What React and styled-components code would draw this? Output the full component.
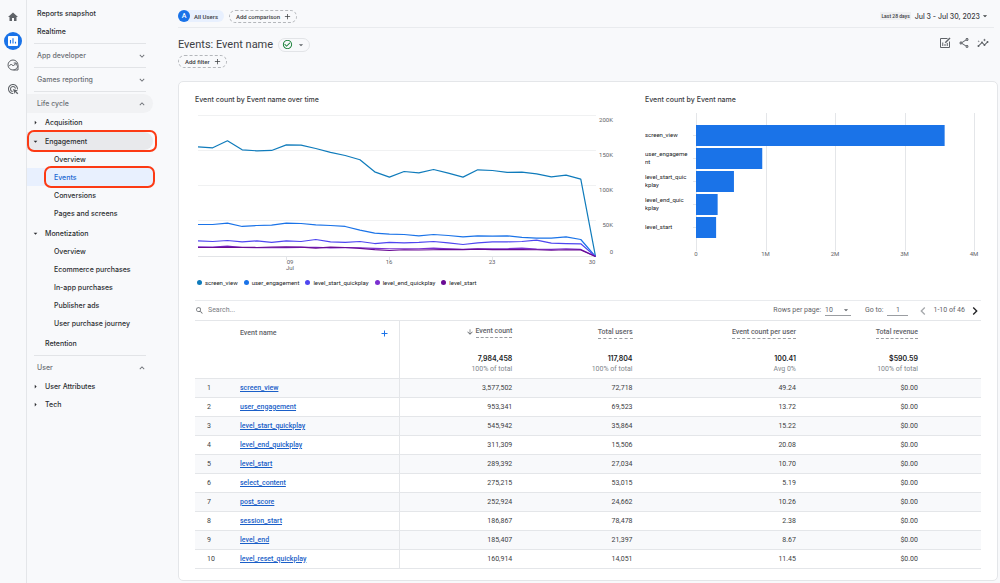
import styled, { createGlobalStyle, css } from "styled-components";
import {
  MdAdd,
  MdAdsClick,
  MdArrowDownward,
  MdArrowDropDown,
  MdArrowRight,
  MdCheckCircleOutline,
  MdChevronLeft,
  MdChevronRight,
  MdHome,
  MdInsights,
  MdKeyboardArrowDown,
  MdKeyboardArrowUp,
  MdOutlineShare,
  MdSearch,
} from "react-icons/md";

const GlobalStyle = createGlobalStyle`
  * {
    box-sizing: border-box;
  }

  body {
    margin: 0;
    background: #f8f9fb;
    color: #202124;
    font-family: Roboto, "Liberation Sans", sans-serif;
    font-size: 7px;
    line-height: 11px;
  }

  button,
  input,
  select {
    margin: 0;
    padding: 0;
    border: 0;
    background: none;
    color: inherit;
    font: inherit;
  }

  button {
    display: inline-flex;
    align-items: center;
    cursor: pointer;
  }

  ul {
    margin: 0;
    padding: 0;
    list-style: none;
  }

  h1,
  h2 {
    margin: 0;
    font-weight: 400;
  }

  svg {
    flex: none;
  }
`;

const Page = styled.div`
  display: grid;
  grid-template-columns: 27px 151px minmax(0, 1fr);
  min-height: 100vh;
`;

/* ---------- icon rail ---------- */

const Rail = styled.nav`
  display: flex;
  flex-direction: column;
  align-items: center;
  gap: 6px;
  padding-top: 8px;
  border-right: 1px solid #e4e6e9;
`;

const RailButton = styled.button`
  justify-content: center;
  width: 18px;
  height: 18px;
  border-radius: 50%;
  color: ${({ $active }) => ($active ? "#fff" : "#5f6368")};
  background: ${({ $active }) => ($active ? "#1a73e8" : "none")};
`;

/* ---------- side menu ---------- */

const Menu = styled.nav`
  padding-top: 4px;
  font-family: Inter, "Liberation Sans", sans-serif;
  font-weight: 500;
`;

const Separator = styled.hr`
  height: 1px;
  margin: ${({ $gap }) => $gap || 2}px 32px 2px 7px;
  border: 0;
  background: #e2e4e7;
`;

const Section = styled.button`
  justify-content: space-between;
  width: 126px;
  height: 19px;
  padding: 0 6px 0 10px;
  border-radius: 0 10px 10px 0;
  color: #6b6f74;
  background: ${({ $open }) => ($open ? "#f1f2f4" : "none")};
`;

const Groups = styled.ul`
  display: flex;
  flex-direction: column;
  gap: 1px;
`;

const SubList = styled.ul`
  margin-bottom: 1px;
`;

const marked = css`
  &::after {
    content: "";
    position: absolute;
    top: -2px;
    right: ${({ $inset }) => ($inset ? -2 : -4)}px;
    bottom: -2px;
    left: ${({ $inset }) => $inset || 0}px;
    border: 2px solid #fc3a14;
    border-radius: 7px;
    pointer-events: none;
  }
`;

const MenuLink = styled.a`
  position: relative;
  display: flex;
  align-items: center;
  width: 126px;
  height: 18px;
  padding-left: ${({ $level }) => [10, 4, 27][$level]}px;
  border-radius: ${({ $selected }) => ($selected ? "0" : "0 9px 9px 0")};
  color: ${({ $selected }) => ($selected ? "#1967d2" : "#2b2d30")};
  background: ${({ $selected, $parent }) =>
    $selected ? "#e8f0fe" : $parent ? "#e8e9ec" : "none"};
  text-decoration: none;
  ${({ $marked }) => $marked && marked}
`;

const Caret = styled.span`
  display: flex;
  width: 14px;
`;

/* ---------- header ---------- */

const Main = styled.main`
  padding-right: 2px;
`;

const TopBar = styled.header`
  display: flex;
  align-items: center;
  gap: 5px;
  height: 28px;
  margin-right: 4px;
  padding-top: 5px;
  border-bottom: 1px solid #e9ebee;
  color: #3c4043;
`;

const Chip = styled.button`
  gap: 3px;
  height: 13px;
  padding: 0 4px 0 6px;
  border: 1px dashed #b4b7bb;
  border-radius: 7px;
  color: #3c4043;
  font-size: 6px;
  font-weight: 500;
`;

const UserChip = styled.button`
  gap: 4px;
  height: 12px;
  padding-right: 6px;
  border-radius: 6px;
  color: #3c4043;
  background: #e8f0fe;
  font-size: 6px;
  font-weight: 500;
`;

const Letter = styled.span`
  width: 12px;
  height: 12px;
  border-radius: 50%;
  background: #1a73e8;
  color: #fff;
  font-size: 7px;
  line-height: 12px;
  text-align: center;
`;

const DateButton = styled.button`
  margin-left: auto;
  padding-right: 4px;
  color: #3c4043;
  font-family: Inter, "Liberation Sans", sans-serif;
  font-weight: 500;
`;

const Period = styled.span`
  margin-right: 4px;
  padding: 0 1px;
  background: #eff0f2;
  font-family: Roboto, "Liberation Sans", sans-serif;
  font-size: 5px;
  line-height: 8px;
`;

const TitleRow = styled.div`
  display: flex;
  align-items: center;
  height: 15px;
  margin-top: 9px;
`;

const Title = styled.h1`
  margin-right: 5px;
  color: #3c4043;
  font-size: 11px;
  line-height: 15px;
`;

const StatusButton = styled.button`
  gap: 3px;
  height: 14px;
  padding: 0 3px;
  border: 1px solid #e2e4e7;
  border-radius: 7px;
  color: #5f6368;
`;

const Tools = styled.div`
  display: flex;
  gap: 7px;
  margin-left: auto;
  padding: 0 9px 3px 0;
  color: #5f6368;
`;

const Filters = styled.div`
  display: flex;
  margin-top: 3px;
`;

/* ---------- report card ---------- */

const Card = styled.section`
  margin: 13px 0 2px;
  padding: 12px 16px 11px;
  border: 1px solid #e4e6e9;
  border-radius: 5px;
  background: #fff;
`;

const Charts = styled.div`
  display: grid;
  grid-template-columns: minmax(0, 1fr) 336px;
  padding-bottom: 12px;
  border-bottom: 1px solid #e9ebee;
`;

const ChartTitle = styled.h2`
  color: #3c4043;
  font-family: Inter, "Liberation Sans", sans-serif;
  font-size: 7px;
  font-weight: 500;
  line-height: 11px;
`;

const Plot = styled.svg`
  display: block;
  width: 100%;
  margin-top: 2px;
  font-size: 6px;
  fill: #5f6368;
`;

const Legend = styled.ul`
  display: flex;
  gap: 6px;
  margin-top: 2px;
  padding-left: 2px;
  font-size: 6px;
`;

const LegendItem = styled.li`
  display: flex;
  align-items: center;
  gap: 3px;

  &::before {
    content: "";
    width: 5px;
    height: 5px;
    border-radius: 50%;
    background: ${({ $color }) => $color};
  }
`;

/* ---------- table ---------- */

const SearchRow = styled.div`
  display: flex;
  align-items: center;
  height: 20px;
  border-bottom: 1px solid #e4e6e9;
  color: #5f6368;
`;

const SearchLabel = styled.label`
  display: flex;
  flex: 1;
  align-items: center;
  gap: 4px;
`;

const SearchInput = styled.input`
  width: 120px;
  outline: none;

  &::placeholder {
    color: #7a7e83;
    opacity: 1;
  }
`;

const Field = styled.label`
  display: flex;
  align-items: center;
  gap: 4px;
  margin-right: ${({ $gap }) => $gap}px;
`;

const SelectBox = styled.span`
  display: flex;
  align-items: center;
  width: 26px;
  border-bottom: 1px solid #9a9da1;

  svg {
    margin-left: -10px;
    pointer-events: none;
  }
`;

const Select = styled.select`
  width: 26px;
  height: 10px;
  appearance: none;
  outline: none;
`;

const PageInput = styled.input`
  width: 21px;
  height: 11px;
  border-bottom: 1px solid #9a9da1;
  outline: none;
  text-align: center;
`;

const Pager = styled.div`
  display: flex;
  align-items: center;
  gap: 2px;
  margin-right: -2px;
`;

const PagerButton = styled.button`
  color: ${({ disabled }) => (disabled ? "#a5a8ac" : "#202124")};
`;

const Table = styled.table`
  width: 100%;
  table-layout: fixed;
  border-collapse: separate;
  border-spacing: 0;

  th,
  td {
    padding: 0 63px 0 0;
    text-align: right;
    white-space: nowrap;
  }

  th:nth-child(1),
  td:nth-child(1) {
    padding: 0 0 0 12px;
    text-align: left;
  }

  th:nth-child(2),
  td:nth-child(2) {
    padding: 0 10px 0 0;
    border-right: 1px solid #e4e6e9;
    text-align: left;
  }
`;

const HeadRow = styled.tr`
  th {
    height: 24px;
    color: #5f6368;
    font-weight: 500;
  }
`;

const TotalRow = styled.tr`
  td {
    height: 34px;
    border-bottom: 1px solid #e4e6e9;
  }
`;

const BodyRow = styled.tr`
  color: #3c4043;

  &:nth-child(odd) {
    background: #f8f9fb;
  }

  td {
    height: 19px;
    border-bottom: 1px solid #e4e6e9;
  }
`;

const NameHead = styled.span`
  display: flex;
  align-items: center;
  justify-content: space-between;
`;

const AddColumn = styled.button`
  color: #1a73e8;
`;

const SortButton = styled.button`
  gap: 2px;
`;

const Dashed = styled.span`
  display: inline-block;
  border-bottom: 1px dashed #9a9da1;
`;

const Total = styled.strong`
  display: block;
  margin-top: 4px;
  font-family: Inter, "Liberation Sans", sans-serif;
  font-weight: 600;
`;

const Share = styled.small`
  display: block;
  color: #80868b;
  font-size: 7px;
`;

const EventLink = styled.a`
  color: #1a5fc8;
  font-weight: 500;
  text-decoration: underline;
`;

const menuGroups = [
  { name: "Acquisition" },
  {
    name: "Engagement",
    parent: true,
    items: ["Overview", "Events", "Conversions", "Pages and screens"],
  },
  {
    name: "Monetization",
    items: [
      "Overview",
      "Ecommerce purchases",
      "In-app purchases",
      "Publisher ads",
      "User purchase journey",
    ],
  },
  { name: "Retention", leaf: true },
];

// daily counts in thousands, July 3 to July 30
const series = [
  {
    name: "screen_view",
    color: "#0f7bbb",
    values: [
      155.6, 154.2, 164.1, 151.3, 149.9, 150.4, 158.4, 158, 153.2, 147.6, 143.3,
      137.2, 120.1, 112.6, 120.6, 118.7, 123.4, 118.2, 112.6, 123, 122, 119.2,
      119.7, 117.3, 113, 115.4, 109.7, 0,
    ],
  },
  {
    name: "user_engagement",
    color: "#1a73e8",
    values: [
      45.4, 45.4, 47.3, 42.6, 44, 44.5, 47.3, 46.8, 44.9, 44, 42.6, 37.4, 33.1,
      31.7, 31.2, 29.3, 31.2, 29.8, 27.9, 29.3, 28.8, 29.3, 27, 26, 26, 27.9,
      24.1, 0,
    ],
  },
  {
    name: "level_start_quickplay",
    color: "#4f46f0",
    values: [
      22.2, 21.3, 22.7, 20.8, 22.2, 19.9, 22.2, 21.3, 24.1, 20.8, 19.9, 21.3,
      18.4, 19.9, 19.4, 19.9, 21.3, 19.4, 17, 19.4, 20.8, 20.8, 21.3, 23.2,
      18.9, 18.4, 18, 0,
    ],
  },
  {
    name: "level_end_quickplay",
    color: "#7b2fd0",
    values: [
      13.6, 13.4, 14.8, 12.8, 12.7, 12.4, 12.6, 12.9, 13.1, 12.2, 12.6, 12.4,
      11.6, 11, 11, 11, 12, 11, 10, 11, 11, 11, 12, 10.6, 10, 11, 10, 0,
    ],
  },
  {
    name: "level_start",
    color: "#6a0b94",
    values: [
      12.8, 12.8, 13.4, 12.9, 12.8, 13.2, 13.6, 13.2, 12, 13.2, 12.8, 11.6, 9.8,
      8.5, 9.6, 9.2, 9.6, 10, 9.8, 10.6, 9.8, 9.8, 9.8, 9.6, 8.9, 9.6, 9.4, 0,
    ],
  },
];

const bars = [
  { label: ["screen_view"], value: 3577502 },
  { label: ["user_engageme", "nt"], value: 953341 },
  { label: ["level_start_quic", "kplay"], value: 545942 },
  { label: ["level_end_quic", "kplay"], value: 311309 },
  { label: ["level_start"], value: 289392 },
];

const totals = [
  ["7,984,458", "100% of total"],
  ["117,804", "100% of total"],
  ["100.41", "Avg 0%"],
  ["$590.59", "100% of total"],
];

const rows = [
  ["screen_view", "3,577,502", "72,718", "49.24", "$0.00"],
  ["user_engagement", "953,341", "69,523", "13.72", "$0.00"],
  ["level_start_quickplay", "545,942", "35,864", "15.22", "$0.00"],
  ["level_end_quickplay", "311,309", "15,506", "20.08", "$0.00"],
  ["level_start", "289,392", "27,034", "10.70", "$0.00"],
  ["select_content", "275,215", "53,015", "5.19", "$0.00"],
  ["post_score", "252,924", "24,662", "10.26", "$0.00"],
  ["session_start", "186,867", "78,478", "2.38", "$0.00"],
  ["level_end", "185,407", "21,397", "8.67", "$0.00"],
  ["level_reset_quickplay", "160,914", "14,051", "11.45", "$0.00"],
];

const ReportsIcon = () => (
  <svg width="12" height="12" viewBox="0 0 24 24" aria-hidden="true">
    <rect x="2" y="2" width="20" height="20" rx="2" fill="#fff" />
    <path
      d="M7 10v7M12 6.500V17M17 13.500V17"
      stroke="#1a73e8"
      strokeWidth="2.2"
      fill="none"
    />
  </svg>
);

const ExploreIcon = () => (
  <svg
    width="12"
    height="12"
    viewBox="0 0 24 24"
    fill="none"
    stroke="currentColor"
    strokeWidth="2"
    aria-hidden="true"
  >
    <path d="M12 2a10 10 0 1 0 0 20a10 10 0 0 0 0-20z" />
    <path d="M22 13v9h-9" />
    <path d="M4 14.500l4.500-4.500 4 4L18 8.500M13.500 8h5v5" />
  </svg>
);

const CustomizeIcon = () => (
  <svg
    width="12"
    height="12"
    viewBox="0 0 24 24"
    fill="none"
    stroke="currentColor"
    strokeWidth="2"
    aria-hidden="true"
  >
    <path d="M17 3H3v18h18V9" />
    <path d="M7.500 11v7M12 14v4M16.500 12v6" />
    <path d="M12.500 11.500L22 2" strokeWidth="3" />
  </svg>
);

const PlusIcon = () => (
  <svg width="9" height="9" viewBox="0 0 9 9" aria-hidden="true">
    <path d="M4.500 1.500v6M1.500 4.500h6" stroke="currentColor" />
  </svg>
);

const SideMenu = () => {
  return (
    <Menu aria-label="Reports">
      <MenuLink href="#snapshot" $level={0}>
        Reports snapshot
      </MenuLink>
      <MenuLink href="#realtime" $level={0}>
        Realtime
      </MenuLink>
      <Separator $gap={3} />
      <Section>
        App developer
        <MdKeyboardArrowDown size={10} />
      </Section>
      <Separator />
      <Section>
        Games reporting
        <MdKeyboardArrowDown size={10} />
      </Section>
      <Separator />
      <Section $open>
        Life cycle
        <MdKeyboardArrowUp size={10} />
      </Section>
      <Groups>
        {menuGroups.map((group) => (
          <li key={group.name}>
            <MenuLink
              href="#group"
              $level={1}
              $parent={group.parent}
              $marked={group.parent}
            >
              <Caret>
                {!group.leaf &&
                  (group.items ? (
                    <MdArrowDropDown size={9} />
                  ) : (
                    <MdArrowRight size={9} />
                  ))}
              </Caret>
              {group.name}
            </MenuLink>
            {group.items && (
              <SubList>
                {group.items.map((item) => (
                  <li key={item}>
                    <MenuLink
                      href="#report"
                      $level={2}
                      $selected={item === "Events"}
                      $marked={item === "Events"}
                      $inset={17}
                    >
                      {item}
                    </MenuLink>
                  </li>
                ))}
              </SubList>
            )}
          </li>
        ))}
      </Groups>
      <Separator $gap={3} />
      <Section>
        User
        <MdKeyboardArrowUp size={10} />
      </Section>
      <ul>
        {["User Attributes", "Tech"].map((name) => (
          <li key={name}>
            <MenuLink href="#group" $level={1}>
              <Caret>
                <MdArrowRight size={9} />
              </Caret>
              {name}
            </MenuLink>
          </li>
        ))}
      </ul>
    </Menu>
  );
};

const LineChart = () => {
  const x = (day) => 3 + (day * 397.5) / 27;
  const y = (value) => 149.5 - value * 0.705;

  return (
    <Plot viewBox="0 0 450 168" role="img" aria-label="Event count over time">
      {[0, 50, 100, 150, 200].map((tick) => (
        <g key={tick}>
          <path
            d={`M3 ${Math.round(y(tick)) - 0.5}H401`}
            stroke={tick ? "#f0f1f2" : "#e2e4e7"}
          />
          <text x="418" y={tick ? y(tick) + 6 : 147} textAnchor="end">
            {tick ? `${tick}K` : "0"}
          </text>
        </g>
      ))}
      <path d="M91.500 150v3M194.500 150v3M297.500 150v3" stroke="#e2e4e7" />
      <g textAnchor="middle">
        <text x="95" y="157">09</text>
        <text x="95" y="163">Jul</text>
        <text x="194" y="157">16</text>
        <text x="297" y="157">23</text>
        <text x="397" y="157">30</text>
      </g>
      {series.map((line) => (
        <polyline
          key={line.name}
          points={line.values.map((v, day) => `${x(day)},${y(v)}`).join(" ")}
          fill="none"
          stroke={line.color}
          strokeWidth="1.2"
          strokeLinejoin="round"
        />
      ))}
    </Plot>
  );
};

const BarChart = () => {
  return (
    <Plot viewBox="0 0 336 168" role="img" aria-label="Event count by name">
      {[0, 1, 2, 3, 4].map((tick) => (
        <g key={tick}>
          <path
            d={`M${51.5 + Math.round(tick * 69.5)} 6V144`}
            stroke="#e4e6e9"
          />
          <text x={51 + tick * 69.5} y="149" textAnchor="middle">
            {tick ? `${tick}M` : "0"}
          </text>
        </g>
      ))}
      {bars.map((bar, i) => (
        <g key={bar.value}>
          <path d={`M48 ${28.5 + i * 23}h3`} stroke="#e4e6e9" />
          <rect
            x="51"
            y={18 + i * 23}
            width={(bar.value / 1000000) * 69.5}
            height="21"
            fill="#1a73e8"
          />
          {bar.label.map((text, n) => (
            <text
              key={text}
              y={(bar.label.length > 1 ? 26 : 30) + i * 23 + n * 8}
              fill="#202124"
            >
              {text}
            </text>
          ))}
        </g>
      ))}
    </Plot>
  );
};

const EventsTable = () => {
  return (
    <Table>
      <colgroup>
        <col style={{ width: 45 }} />
        <col style={{ width: 160 }} />
        <col style={{ width: "22.3%" }} />
        <col style={{ width: "15.3%" }} />
        <col style={{ width: "20.8%" }} />
        <col />
      </colgroup>
      <thead>
        <HeadRow>
          <th />
          <th scope="col">
            <NameHead>
              Event name
              <AddColumn aria-label="Add dimension">
                <PlusIcon />
              </AddColumn>
            </NameHead>
          </th>
          <th scope="col">
            <SortButton>
              <MdArrowDownward size={8} />
              <Dashed>Event count</Dashed>
            </SortButton>
          </th>
          <th scope="col">
            <Dashed>Total users</Dashed>
          </th>
          <th scope="col">
            <Dashed>Event count per user</Dashed>
          </th>
          <th scope="col">
            <Dashed>Total revenue</Dashed>
          </th>
        </HeadRow>
        <TotalRow>
          <td />
          <td />
          {totals.map(([value, share]) => (
            <td key={value}>
              <Total>{value}</Total>
              <Share>{share}</Share>
            </td>
          ))}
        </TotalRow>
      </thead>
      <tbody>
        {rows.map(([name, ...values], i) => (
          <BodyRow key={name}>
            <td>{i + 1}</td>
            <td>
              <EventLink href={`#${name}`}>{name}</EventLink>
            </td>
            {values.map((value, n) => (
              <td key={n}>{value}</td>
            ))}
          </BodyRow>
        ))}
      </tbody>
    </Table>
  );
};

export default function App() {
  return (
    <>
      <GlobalStyle />
      <Page>
        <Rail aria-label="Main">
          <RailButton aria-label="Home">
            <MdHome size={12} />
          </RailButton>
          <RailButton aria-label="Reports" $active>
            <ReportsIcon />
          </RailButton>
          <RailButton aria-label="Explore">
            <ExploreIcon />
          </RailButton>
          <RailButton aria-label="Advertising">
            <MdAdsClick size={12} />
          </RailButton>
        </Rail>
        <SideMenu />
        <Main>
          <TopBar>
            <UserChip>
              <Letter>A</Letter>
              All Users
            </UserChip>
            <Chip>
              Add comparison
              <MdAdd size={9} />
            </Chip>
            <DateButton>
              <Period>Last 28 days</Period>
              Jul 3 - Jul 30, 2023
              <MdArrowDropDown size={10} />
            </DateButton>
          </TopBar>
          <TitleRow>
            <Title>Events: Event name</Title>
            <StatusButton aria-label="Report status">
              <MdCheckCircleOutline size={11} color="#188038" />
              <MdArrowDropDown size={10} />
            </StatusButton>
            <Tools>
              <button aria-label="Customize report">
                <CustomizeIcon />
              </button>
              <button aria-label="Share this report">
                <MdOutlineShare size={12} />
              </button>
              <button aria-label="Insights">
                <MdInsights size={12} />
              </button>
            </Tools>
          </TitleRow>
          <Filters>
            <Chip>
              Add filter
              <MdAdd size={9} />
            </Chip>
          </Filters>
          <Card>
            <Charts>
              <div>
                <ChartTitle>Event count by Event name over time</ChartTitle>
                <LineChart />
                <Legend>
                  {series.map((line) => (
                    <LegendItem key={line.name} $color={line.color}>
                      {line.name}
                    </LegendItem>
                  ))}
                </Legend>
              </div>
              <div>
                <ChartTitle>Event count by Event name</ChartTitle>
                <BarChart />
              </div>
            </Charts>
            <SearchRow>
              <SearchLabel>
                <MdSearch size={9} />
                <SearchInput placeholder="Search..." aria-label="Search" />
              </SearchLabel>
              <Field $gap={14}>
                Rows per page:
                <SelectBox>
                  <Select defaultValue="10">
                    <option>10</option>
                    <option>25</option>
                    <option>50</option>
                  </Select>
                  <MdArrowDropDown size={10} />
                </SelectBox>
              </Field>
              <Field $gap={7}>
                Go to:
                <PageInput defaultValue="1" />
              </Field>
              <Pager>
                <PagerButton aria-label="Previous page" disabled>
                  <MdChevronLeft size={16} />
                </PagerButton>
                1-10 of 46
                <PagerButton aria-label="Next page">
                  <MdChevronRight size={16} />
                </PagerButton>
              </Pager>
            </SearchRow>
            <EventsTable />
          </Card>
        </Main>
      </Page>
    </>
  );
}
